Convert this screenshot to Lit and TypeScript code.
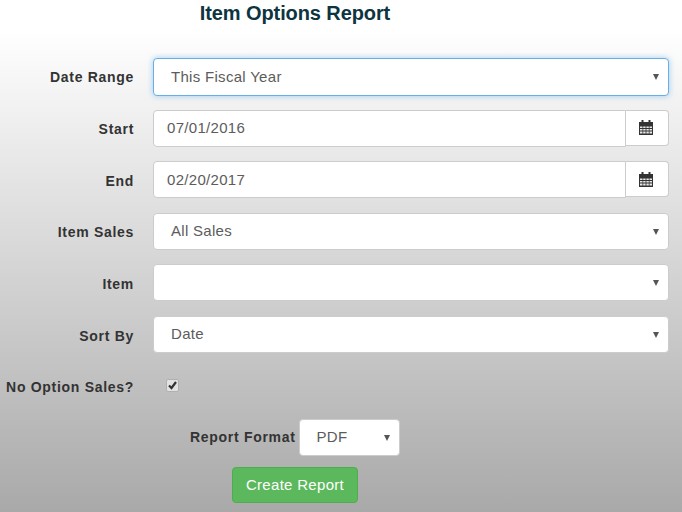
import { LitElement, html, css } from "lit";
import { customElement } from "lit/decorators.js";

const calendar = html`<svg class="cal" width="14" height="15" viewBox="0 0 14 15"><path fill="#333" d="M0 2h14v13H0z"/><path fill="#333" d="M2.500 0h2v3h-2zM9.500 0h2v3h-2z"/><g fill="#e8e8e8"><path d="M1 6.500h2.500V8H1zM4.200 6.500h2.400V8H4.200zM7.400 6.500h2.400V8H7.400zM10.500 6.500H13V8h-2.500zM1 9h2.500v1.500H1zM4.200 9h2.400v1.500H4.200zM7.400 9h2.400v1.500H7.400zM10.500 9H13v1.500h-2.500zM1 11.500h2.500V13.500H1zM4.200 11.500h2.400V13.500H4.200zM7.400 11.500h2.400V13.500H7.400zM10.500 11.500H13V13.500h-2.500z"/></g></svg>`;

@customElement("app-root")
export class AppRoot extends LitElement {
  static styles = css`
    :host { display: block; width: 682px; height: 512px; overflow: hidden; font-family: "Liberation Sans", Arial, sans-serif; color: #333; background: linear-gradient(180deg, #fff 30px, #a9a9a9 512px); }
    h1 { margin: 0; width: 590px; height: 58px; box-sizing: border-box; padding-top: 1px; text-align: center; font-size: 20px; line-height: 24px; font-weight: 700; letter-spacing: -.1px; color: #0d3440; }
    .form { display: grid; grid-template-columns: 134px 516px; column-gap: 19px; row-gap: 14.6px; grid-auto-rows: 37px; align-items: start; }
    label { justify-self: end; font-size: 14px; line-height: 20px; padding-top: 9.6px; font-weight: 700; letter-spacing: .7px; white-space: nowrap; color: #333; }
    label.first { padding-top: 9px; }
    .ctl { box-sizing: border-box; height: 37px; background: #fff; border: 1px solid #ccc; border-radius: 4px; font-size: 15px; color: #5c5c5c; display: flex; align-items: center; letter-spacing: .3px; }
    .sel { position: relative; padding: 0 17px 2px; }
    .focus { height: 38px; border-color: #66afe9; box-shadow: 0 0 6px rgba(102,175,233,.6); }
    .arrow { position: absolute; right: 9px; top: 15px; width: 0; height: 0; border-left: 3px solid transparent; border-right: 3px solid transparent; border-top: 6px solid #555; }
    .group { display: flex; }
    .date { flex: 1; padding: 0 13px 1px; border-radius: 4px 0 0 4px; }
    .addon { width: 43px; height: 36px; box-sizing: border-box; padding-right: 2px; background: #fff; border: 1px solid #ccc; border-left: 0; border-radius: 0 4px 4px 0; display: flex; align-items: center; justify-content: center; }
    .check { height: 37px; display: flex; align-items: center; }
    .box { width: 11px; height: 11px; margin-left: 13px; background: #e2e2e2; border: 1px solid #b0b0b0; border-radius: 2px; display: flex; margin-bottom: 1px; }
    .bottom { display: flex; flex-direction: column; align-items: flex-start; }
    .format { display: flex; align-items: center; margin: 14px 0 0 190px; }
    .format label { margin-right: 3px; padding-top: 0; }
    .pdf { width: 101px; }
    button { margin: 11px 0 0 232px; width: 126px; height: 36px; background: #5cb85c; border: 1px solid #4cae4c; border-radius: 4px; color: #fff; font: 15px "Liberation Sans", Arial, sans-serif; letter-spacing: .3px; padding: 0 0 1px; }
  `;

  private sel(text: string, extra = "") {
    return html`<div class="ctl sel ${extra}">${text}<span class="arrow"></span></div>`;
  }

  private date(text: string) {
    return html`<div class="group"><div class="ctl date">${text}</div><div class="addon">${calendar}</div></div>`;
  }

  render() {
    return html`
      <h1>Item Options Report</h1>
      <div class="form">
        <label class="first">Date Range</label>${this.sel("This Fiscal Year", "focus")}
        <label>Start</label>${this.date("07/01/2016")}
        <label>End</label>${this.date("02/20/2017")}
        <label>Item Sales</label>${this.sel("All Sales")}
        <label>Item</label>${this.sel("")}
        <label>Sort By</label>${this.sel("Date")}
        <label>No Option Sales?</label>
        <div class="check"><span class="box"><svg width="11" height="11" viewBox="0 0 11 11"><path d="M2 5.500l2.500 2.500L9 2" fill="none" stroke="#333" stroke-width="2.200"/></svg></span></div>
      </div>
      <div class="bottom">
        <div class="format"><label>Report Format</label>${this.sel("PDF", "pdf")}</div>
        <button>Create Report</button>
      </div>
    `;
  }
}
